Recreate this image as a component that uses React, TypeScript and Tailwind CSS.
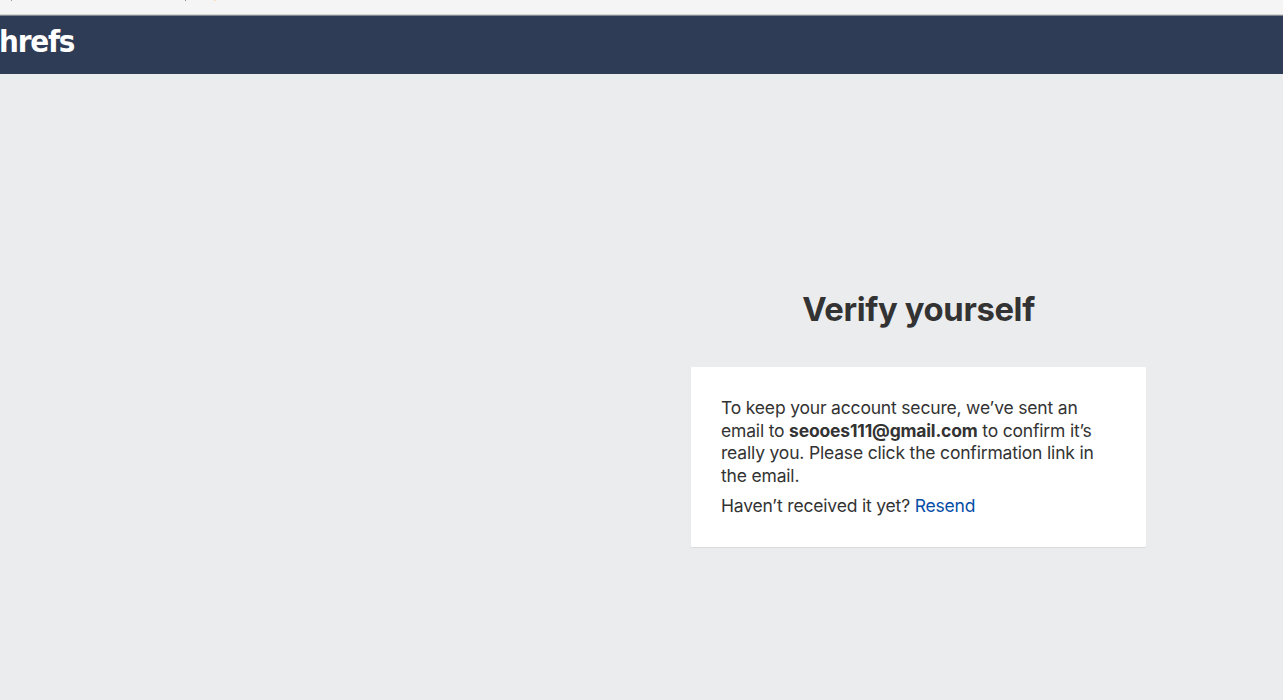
import React from "react";

export interface VerifyCardProp {
  email: string;
}

const BrowserEdge: React.FC = () => {
  return (
    <div className="flex h-4 shrink-0 flex-col justify-between border-b border-[#7d8590] bg-[#f5f5f5]">
      <div className="flex h-px">
        <span className="ml-[11px] h-px w-px bg-[#9a9a9a]" />
        <span className="ml-[173px] h-px w-px bg-[#8b8b8b]" />
        <span className="ml-[28px] h-px w-[2px] bg-[#fbdfbd]" />
      </div>
      <div className="h-px bg-[#d5d6d2]" />
    </div>
  );
};

const Header: React.FC = () => {
  return (
    <header className="flex h-[58px] shrink-0 items-start bg-[#2f3c56] pt-[7px]">
      <span className="ml-[-1px] font-['DejaVu_Sans_Condensed','DejaVu_Sans',sans-serif] text-[31px] leading-[36px] font-bold tracking-[-1.2px] text-white [font-stretch:condensed]">
        hrefs
      </span>
    </header>
  );
};

const VerifyCard: React.FC<VerifyCardProp> = ({ email }) => {
  return (
    <div className="h-[180px] w-[455px] rounded-[1px] bg-white p-[30px] pr-5 text-[17.5px] leading-[22.5px] tracking-[-0.18px] text-[#333333] shadow-[0_1px_1px_rgba(0,0,0,0.08)]">
      <p className="mb-[7.5px]">
        To keep your account secure, we’ve sent an
        <br />
        email to <b className="font-bold">{email}</b> to confirm it’s
        <br />
        really you. Please click the confirmation link in
        <br />
        the email.
      </p>
      <p>
        Haven’t received it yet?{" "}
        <a href="#" className="text-[#054da7]">
          Resend
        </a>
      </p>
    </div>
  );
};

const App: React.FC = () => {
  return (
    <div className="flex h-screen flex-col overflow-hidden bg-[#ebeced] font-['Inter',sans-serif]">
      <BrowserEdge />
      <Header />
      <main className="ml-[691px] flex w-[455px] flex-col items-center pt-[215px]">
        <h1 className="mb-[38px] text-[32.8px] leading-[40px] font-bold tracking-[-0.35px] whitespace-nowrap text-[#333333]">
          Verify yourself
        </h1>
        <VerifyCard email="seooes111@gmail.com" />
      </main>
    </div>
  );
};

export default App;
